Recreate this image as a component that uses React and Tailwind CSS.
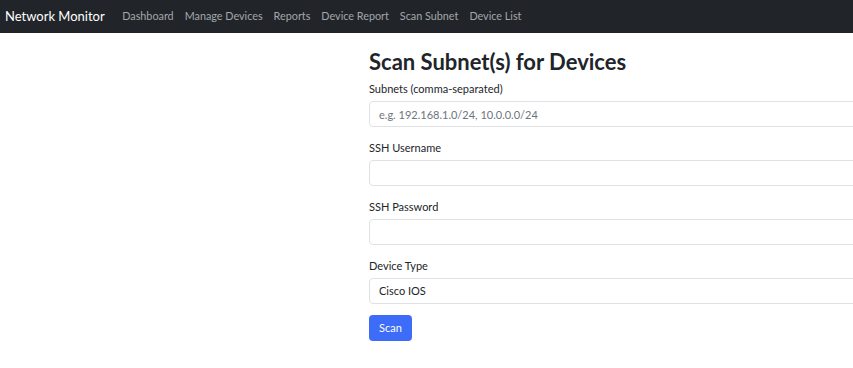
import React from 'react'

const links = ['Dashboard', 'Manage Devices', 'Reports', 'Device Report', 'Scan Subnet', 'Device List']

function Field({ label, last, children }) {
  return (
    <div className={last ? 'mb-[11px]' : 'mb-[13px]'}>
      <label className="block text-[11px] leading-[15px] text-[#212529] mb-[5px]">{label}</label>
      {children}
    </div>
  )
}

export default function App() {
  const inputCls =
    'block w-[700px] h-[26px] px-[9px] text-[11px] text-[#212529] border border-[#dee2e6] rounded-[4px] bg-white outline-none placeholder:text-[#6c757d]'

  return (
    <div className="w-[853px] h-[368px] overflow-hidden bg-white font-['Lato',sans-serif]">
      {/* Navbar */}
      <nav className="h-[33px] bg-[#212529] flex items-center pl-[5px]">
        <span className="text-[13px] text-white mr-[12px] leading-none">Network Monitor</span>
        {links.map((l) => (
          <a key={l} className="px-[5.5px] text-[10.8px] text-[#a4a7aa] leading-none">
            {l}
          </a>
        ))}
      </nav>

      {/* Form */}
      <div className="pl-[369px] pt-[14px]">
        <h2 className="text-[22px] font-bold leading-[30px] text-[#212529] mb-[4px]">Scan Subnet(s) for Devices</h2>
        <form>
          <Field label="Subnets (comma-separated)">
            <input className={inputCls} placeholder="e.g. 192.168.1.0/24, 10.0.0.0/24" />
          </Field>
          <Field label="SSH Username">
            <input className={inputCls} />
          </Field>
          <Field label="SSH Password">
            <input type="password" className={inputCls} />
          </Field>
          <Field label="Device Type" last>
            <div className={inputCls + ' flex items-center'}>Cisco IOS</div>
          </Field>
          <button
            type="button"
            className="block h-[26px] px-[10px] text-[11px] text-white bg-[#3d6cf8] rounded-[4px]"
          >
            Scan
          </button>
        </form>
      </div>
    </div>
  )
}
